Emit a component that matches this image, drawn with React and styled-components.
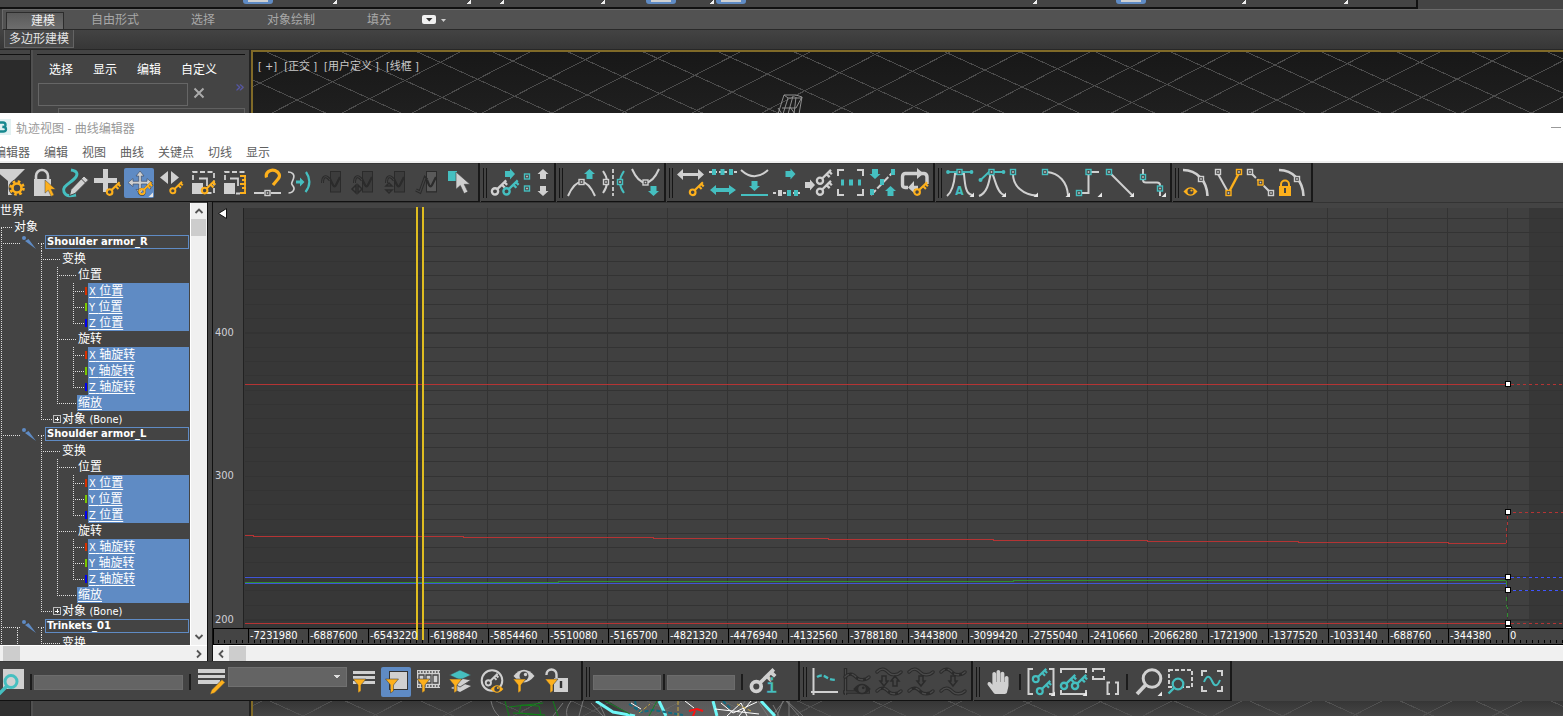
import styled, { createGlobalStyle, css } from "styled-components";
import { FaHandPaper } from "react-icons/fa";

const W = "#d0d0d0";
const T = "#45bfc0";
const O = "#fdb01c";
const D = "#2b2b2b";
const BG = "#444444";
const BLUE = "#5f8bc4";

const GlobalStyle = createGlobalStyle`
  * {
    box-sizing: border-box;
  }
  body {
    margin: 0;
    background: ${BG};
    overflow: hidden;
    font-family: "DejaVu Sans Condensed", "Noto Sans CJK SC", sans-serif;
    font-size: 12px;
  }
  button, input, select {
    font: inherit;
    border: 0;
    padding: 0;
    margin: 0;
    border-radius: 0;
  }
`;

/* ---------- icon pieces, all on a 30x30 grid ---------- */

const Key = ({ x, y, s = 1, c = O }) => (
  <g transform={`translate(${x} ${y}) scale(${s})`} fill="none" stroke={c}>
    <circle cx="3.6" cy="10.6" r="2.8" strokeWidth="2.1" />
    <path d="M5.6 8.6 13.6.8M9.6 4.6l2.8 2.8M11.8 2.2l2.6 2.6" strokeWidth="2.1" />
  </g>
);

const Node = ({ x, y, c = T }) => (
  <g>
    <rect x={x - 2.5} y={y - 2.5} width="5" height="5" fill={BG} stroke={c} strokeWidth="1.4" />
    <rect x={x - 0.8} y={y - 0.8} width="1.6" height="1.6" fill={W} />
  </g>
);

const Arrow = ({ x, y, r = 0, c = T }) => (
  <path
    d="M0-5 5.5 0H3V5H-3V0H-5.5Z"
    fill={c}
    transform={`translate(${x} ${y}) rotate(${r})`}
  />
);

const Funnel = ({ x = 4, y = 12 }) => (
  <path
    d="M0 0H13L8 6V12L5 14V6Z"
    transform={`translate(${x} ${y})`}
    fill={O}
    stroke={BG}
    strokeWidth=".6"
  />
);

const Corner = () => <path d="M29 24.5V29H24.5Z" fill="#e8e8e8" />;

const Line = ({ d, c = W, w = 2, dash }) => (
  <path d={d} fill="none" stroke={c} strokeWidth={w} strokeDasharray={dash} />
);

const Eye = ({ x, y, s = 1, c = O }) => (
  <g transform={`translate(${x} ${y}) scale(${s})`}>
    <path d="M-7 0Q0-8.5 7 0 0 8.5-7 0Z" fill={c} />
    <circle r="3" fill={BG} />
    <circle cx="1" cy="-1" r="1.1" fill={c} />
  </g>
);

const Cursor = ({ x, y, s = 1, c = W }) => (
  <path
    d="M0 0V16L4 12.5 7.5 20 11 18.4 7.6 11.4H13Z"
    fill={c}
    stroke={BG}
    strokeWidth=".6"
    transform={`translate(${x} ${y}) scale(${s})`}
  />
);

const Ghost = ({ children, hump = true }) => (
  <g>
    <rect x="14.5" y="3.5" width="10" height="20.5" fill="#3c3c3c" stroke={D} />
    <path d="M14 11 17 17Q18.500 20 20 17L24 9" fill="none" stroke={D} strokeWidth="2.200" />
    {hump && (
      <>
        <path d="M6.500 15C6.500 8 10 6.500 14 12" fill="none" stroke={D} strokeWidth="3" />
        <path d="M6.500 15C6.500 8 10 6.500 14 12" fill="none" stroke={BG} strokeWidth="1" />
      </>
    )}
    {children}
  </g>
);

const Wave = ({ y, c = D, dash, hollow }) => (
  <g fill="none" strokeLinecap="round">
    <path d={`M3 ${y}C9 ${y - 6} 13 ${y - 1} 15 ${y + 1}S23 ${y + 4} 27 ${y}`} stroke={c} strokeWidth="3.400" />
    {hollow && (
      <path d={`M3 ${y}C9 ${y - 6} 13 ${y - 1} 15 ${y + 1}S23 ${y + 4} 27 ${y}`} stroke="#4a4a4a" strokeWidth="1.400" strokeDasharray={dash} />
    )}
  </g>
);

const GhostArrow = ({ x, y, r }) => (
  <path d="M0-5 4 0H2V5H-2V0H-4Z" fill="none" stroke={D} strokeWidth="1.500" transform={`translate(${x} ${y}) rotate(${r})`} />
);

const icons = {
  filter: (
    <>
      <path d="M-3 1H29L17 13V27H12V13L0 3Z" fill={W} />
      <circle cx="21" cy="20" r="8.500" fill={BG} />
      <circle cx="21" cy="20" r="6.500" fill="none" stroke={O} strokeWidth="2.600" strokeDasharray="2.600 2.500" />
      <circle cx="21" cy="20" r="4.500" fill="none" stroke={O} strokeWidth="2.600" />
    </>
  ),
  lock: (
    <>
      <path d="M8 12V8a6 6 0 0 1 12 0v4" fill="none" stroke={W} strokeWidth="2.600" />
      <rect x="6" y="11" width="17" height="17" fill={W} />
      <Cursor x={17} y={12} s={0.82} c={O} />
    </>
  ),
  draw: (
    <>
      <Line d="M11 2C18 3 19 7 13 12S2 19 4 24 11 28 16 27" c={T} w={3} />
      <path d="M24 8 28.500 12 15 25.500 9.500 27.500 11 21.500Z" fill={W} stroke={BG} />
      <path d="M21.500 11 25.500 15" stroke={BG} />
    </>
  ),
  addKey: (
    <>
      <path d="M11 1h5v9h9v5h-9v9h-5v-9H2v-5h9Z" fill={W} />
      <Key x={14} y={13.500} />
    </>
  ),
  move: (
    <>
      <path d="M16 3 20 8H17.300V13.300H23V10.500L28 14.600 23 18.600V16H17.300V21.500H20L16 26 12 21.500H14.700V16H9V18.600L4 14.600 9 10.500V13.300H14.700V8H12Z" fill={W} stroke="#40506a" strokeWidth=".7" />
      <Key x={14} y={13} c="#2d3c55" s={1.030} />
      <Key x={14.500} y={13.500} s={0.950} />
      <Corner />
    </>
  ),
  slide: (
    <>
      <path d="M12 3V16L4 9.500ZM15 3 23 9.500 15 16Z" fill={W} />
      <Key x={13.500} y={13} s={0.920} />
    </>
  ),
  scale: (
    <>
      <Line d="M5 12V4H26V25H16" w={1.800} dash="5 2.500" />
      <rect x="4" y="15" width="11" height="11" fill={W} />
      <Line d="M11 10.500H19V18" w={1.800} />
      <Key x={13} y={12} />
    </>
  ),
  scaleValue: (
    <>
      <Line d="M5 12V4H26M16 25.500H20" w={1.800} dash="5 2.500" />
      <rect x="4" y="15" width="11" height="11" fill={W} />
      <Line d="M10 10.500H18V18" w={1.800} />
      <Line d="M25 7V26M20 8H26M22 12H26M20 16H26M22 20H26M20 25H26" c={O} w={1.800} />
    </>
  ),
  snap: (
    <>
      <Line d="M14.500 9.500C13 4 19 1 23 2.500S29 8 26 11L21 17" c={O} w={3.200} />
      <Line d="M2 25H12M19 25H29" />
      <Node x={15.500} y={25} c={W} />
    </>
  ),
  parameter: (
    <>
      <Line d="M4 4C8 4 11 6 9.500 10.500S6.500 15 9 18 9 25 4.500 25" w={1.600} />
      <path d="M12 12.500H16V9.500L20.500 14 16 18.500V15.500H12Z" fill={T} />
      <Line d="M22 4Q29 14 21.500 24" c={T} w={2.200} />
    </>
  ),
  ghost1: <Ghost />,
  ghost2: (
    <Ghost>
      <path d="M4 21l4-4v8ZM14 21l-4-4v8Z" fill={BG} stroke={D} strokeWidth="1.500" />
    </Ghost>
  ),
  ghost3: (
    <Ghost>
      <path d="M9 15l3 3H6ZM9 25l3-3H6Z" fill={BG} stroke={D} strokeWidth="1.500" />
    </Ghost>
  ),
  ghost4: (
    <Ghost hump={false}>
      <rect x="15" y="4" width="9" height="19" fill="#5a5a5a" />
      <path d="M15 12 17 17Q18.500 20 20 17L24 9" fill="none" stroke={D} strokeWidth="2.200" />
      <path d="M4 22 8 24 13 10 15 12" fill="none" stroke={D} strokeWidth="3.200" />
      <path d="M4 22 8 24 13 10" fill="none" stroke={BG} strokeWidth="1.200" />
    </Ghost>
  ),
  select: (
    <>
      <rect x="4" y="3" width="9" height="10" fill={T} />
      <Cursor x={12} y={4} s={1.080} />
    </>
  ),
  moveKeys: (
    <>
      <Arrow x={20} y={6} r={90} />
      <Key x={1} y={11.500} c={W} s={1.120} />
      <Key x={12.500} y={11.500} c={T} s={1.120} />
    </>
  ),
  valueDots: (
    <>
      <Node x={5} y={8.500} />
      <Node x={5} y={20.500} />
      <Arrow x={21} y={6} c={W} />
      <Arrow x={21} y={23} r={180} c={W} />
    </>
  ),
  peak: (
    <>
      <Line d="M2 28C6 19 11 14 15.500 14S25 19 29 28" />
      <Node x={15.500} y={14} c={W} />
      <Arrow x={23.500} y={6} />
    </>
  ),
  mirror: (
    <>
      <Line d="M5 3Q13 14 5 25" />
      <Line d="M15 1V28" w={1.800} dash="4 2" />
      <Line d="M26 3Q18 14 26 25" c={T} />
      <Node x={8} y={14} c={W} />
      <Node x={22} y={14} />
    </>
  ),
  valley: (
    <>
      <Line d="M2 1C6 10 11 14.500 15.500 14.500S25 10 29 1" />
      <Node x={15.500} y={14.500} c={W} />
      <Arrow x={23.500} y={23} r={180} />
    </>
  ),
  stretch: (
    <>
      <path d="M1 6.500 7 1V5H22V1L28 6.500 22 12V8H7V12Z" fill={W} />
      <Key x={13} y={13.500} s={1.020} />
    </>
  ),
  spread: (
    <>
      <Line d="M1 4H29" c={W} dash="3 2" />
      <path d="M4 1h4v6H4ZM12.500 1h4v6h-4ZM21 1h4v6h-4ZM2 22 8 17V20H21V17L28 22 21 27V24H8V27Z" fill={T} />
    </>
  ),
  flatten: (
    <>
      <Line d="M1 2Q14.500 14.500 28 2" />
      <Arrow x={14.500} y={18} r={180} />
      <Line d="M1 27H28" c={T} />
    </>
  ),
  shiftRight: (
    <>
      <Arrow x={18.500} y={6} r={90} />
      <Line d="M1 25H28" dash="3 2" />
      <rect x="6" y="22" width="4" height="6" fill={W} />
      <path d="M15 22h4v6h-4ZM22 22h4v6h-4Z" fill={T} />
    </>
  ),
  insertKeys: (
    <>
      <Arrow x={6} y={17} r={90} c={W} />
      <Key x={12} y={1} c={W} s={1.100} />
      <Key x={12} y={12} c={W} s={1.100} />
    </>
  ),
  frame: (
    <>
      <Line d="M2 8V2H8M21 2H27V8M27 21V27H21M8 27H2V21" />
      <path d="M5 11.500h3v6H5ZM13 11.500h4v6h-4ZM22 11.500h3v6h-3Z" fill={T} />
    </>
  ),
  sendValues: (
    <>
      <Line d="M3 27 27 2" dash="7 2" />
      <path d="M2 21h4v6H2ZM12 11h4v6h-4ZM23 1h4v6h-4Z" fill={T} />
      <Arrow x={7} y={6} r={180} />
      <Arrow x={22.500} y={23} />
    </>
  ),
  loop: (
    <>
      <Line d="M8 19.500H5Q2.500 19.500 2.500 17V9Q2.500 5.500 5 5.500H18M21 5.500H24Q27 6 27 9V16" w={3.400} />
      <path d="M17 0V11L23.500 5.500ZM14 13V25L8 19.500ZM14 17.800H18V21H14Z" fill={W} />
      <Key x={13.500} y={13.500} />
    </>
  ),
  tanAuto: (
    <>
      <Line d="M2 28C7 24 9 18 10 6H19C20 18 21 26 27 27" />
      <Line d="M2 4H27" c={T} w={1.800} />
      <circle cx="3" cy="4" r="1.900" fill={T} />
      <circle cx="26.500" cy="4" r="1.900" fill={T} />
      <Node x={14.500} y={4} />
      <text x="14.500" y="27" textAnchor="middle" fontSize="12" fontWeight="bold" fill={T}>A</text>
      <Corner />
    </>
  ),
  tanSpline: (
    <>
      <Line d="M2 28C10 25 12 15 13.500 6M15.500 6C18 11 20 25 27 27" />
      <Line d="M3.500 12 12 4H26" c={T} w={1.800} />
      <circle cx="3.500" cy="12" r="2" fill={T} />
      <circle cx="26.500" cy="4" r="1.900" fill={T} />
      <Node x={14.500} y={4} />
      <Corner />
    </>
  ),
  tanFast: (
    <>
      <Line d="M4 6C4 18 14 27 28 27.500" />
      <Node x={4} y={4} />
      <Corner />
    </>
  ),
  tanSlow: (
    <>
      <Line d="M6 4C18 5 26 14 27 27" />
      <Node x={4} y={4} />
      <Corner />
    </>
  ),
  tanStep: (
    <>
      <Line d="M26 4H15.500V25H6" />
      <Node x={15.500} y={4} />
      <Node x={6} y={25} />
      <Corner />
    </>
  ),
  tanLinear: (
    <>
      <Line d="M5 5 27 27" />
      <Node x={4} y={4} />
      <Corner />
    </>
  ),
  tanSmooth: (
    <>
      <Line d="M6 1V12Q6 14.500 9 14.500H20Q23 14.500 23 17V28" />
      <Node x={6} y={9} />
      <Node x={23} y={20.500} />
      <Corner />
    </>
  ),
  tanShow: (
    <>
      <Line d="M1 2C15 2 25 13 25.500 28" w={2.600} />
      <Node x={19} y={11} c={W} />
      <Eye x={8.500} y={23.500} />
    </>
  ),
  tanBreak: (
    <>
      <Line d="M4 6 14 24" />
      <Line d="M24.500 6 15 24" c={O} w={2.400} />
      <Node x={4} y={4} c={W} />
      <Node x={25} y={4} c={O} />
      <Node x={14.500} y={25} c={O} />
    </>
  ),
  tanUnify: (
    <>
      <Line d="M5 5 25 25" dash="7 2" />
      <Node x={4} y={4} c={W} />
      <Node x={14.500} y={14.500} c={O} />
      <Node x={25} y={25} c={W} />
    </>
  ),
  tanLock: (
    <>
      <Line d="M1 2C15 2 25 13 25.500 28" w={2.600} />
      <Node x={19} y={11} c={W} />
      <path d="M3 19V16.500a4 4 0 0 1 8 0V19" fill="none" stroke={O} strokeWidth="2" />
      <rect x="1" y="18" width="12" height="10" fill={O} />
      <path d="M7 20v5" stroke={BG} strokeWidth="2" />
    </>
  ),
  zoomSelected: (
    <>
      <rect x="7" y="2" width="21" height="20" fill={W} />
      <circle cx="15" cy="14.500" r="6" fill={W} stroke={T} strokeWidth="3" />
      <Line d="M11 19 3 27" c={T} w={3.400} />
    </>
  ),
  editSet: (
    <>
      <path d="M2 2h27v4H2ZM2 8h27v3H2ZM2 13h22v4H2Z" fill={W} />
      <path d="M26 12.500 29 15.500 18.500 26 14 27.500 15.500 23Z" fill={O} stroke={BG} strokeWidth=".6" />
    </>
  ),
  filterList: (
    <>
      <path d="M4 4h22v3H4ZM4 9h22v3H4ZM4 14h22v3H4Z" fill={W} />
      <Funnel />
    </>
  ),
  filterSelected: (
    <>
      <rect x="8.500" y="4.500" width="18" height="18" fill={W} stroke="#333" />
      <Funnel x={4.500} />
    </>
  ),
  filterFilm: (
    <>
      <rect x="4" y="3" width="23" height="18" fill={W} />
      <path d="M5 5H27M5 19H27" stroke={BG} strokeWidth="1.600" strokeDasharray="1.600 1.400" />
      <path d="M6 8h5v8H6ZM13 8h5v8h-5ZM20 8h5v8h-5Z" fill="none" stroke={BG} strokeWidth="1.300" />
      <Funnel />
    </>
  ),
  filterLayers: (
    <>
      <path d="M6 21 16 16 26 19 15 25Z" fill={W} />
      <path d="M6 15 15 11 26 13 15 20Z" fill={W} stroke={BG} strokeWidth=".8" />
      <path d="M4.500 8 15 3 26 8 15 13Z" fill={T} stroke={BG} strokeWidth=".6" />
      <Funnel />
    </>
  ),
  filterAnimated: (
    <>
      <circle cx="15" cy="13.500" r="10.300" fill="none" stroke={W} strokeWidth="2" />
      <Key x={8} y={6} c={W} s={0.930} />
      <Eye x={20} y={22} s={0.900} />
    </>
  ),
  filterVisible: (
    <>
      <Eye x={15} y={9} s={1.500} c={W} />
      <Funnel />
    </>
  ),
  filterUnlocked: (
    <>
      <path d="M5.500 8V7.500a5 5 0 0 1 10 0V12" fill="none" stroke={W} strokeWidth="2.400" />
      <rect x="13" y="11" width="14" height="14" fill={W} />
      <path d="M20 14v7" stroke="#333" strokeWidth="2.400" />
      <Funnel />
    </>
  ),
  keyInfo: (
    <>
      <Key x={1} y={1} c={W} s={1.750} />
      <text x="22.500" y="26" textAnchor="middle" fontSize="19" fontWeight="bold" fontFamily="DejaVu Sans Mono" fill={T} stroke={BG} strokeWidth=".4">i</text>
    </>
  ),
  outOfRange: (
    <>
      <Line d="M3.500 1V28M1 25H28" />
      <Line d="M7 10Q12 7 16 10T27 13" c={T} w={2.400} dash="5 2" />
    </>
  ),
  isolate: (
    <>
      <Line d="M3.500 1V28M1 25H28" c={D} w={3.400} />
      <Line d="M3.500 2V28M2 25H27" c="#4a4a4a" w={1} />
      <Wave y={10} hollow dash="4 4" />
      <Eye x={20} y={22} s={1.250} c={D} />
    </>
  ),
  relative: (
    <>
      <Wave y={5} hollow />
      <GhostArrow x={10} y={14} r={180} />
      <GhostArrow x={21} y={14} r={0} />
      <Wave y={24} hollow dash="4 4" />
    </>
  ),
  bufferA: (
    <>
      <Wave y={5} hollow />
      <GhostArrow x={15} y={14} r={180} />
      <Wave y={24} hollow dash="3 5" />
    </>
  ),
  bufferB: (
    <>
      <Wave y={5} hollow dash="4 4" />
      <GhostArrow x={15} y={14} r={180} />
      <Wave y={24} hollow />
    </>
  ),
  frameHoriz: (
    <>
      <Line d="M7 2H2.500V27H7M23 2H27.500V27H23" />
      <Key x={6} y={1} c={T} s={1.050} />
      <Key x={10} y={13} c={T} s={1.050} />
      <Corner />
    </>
  ),
  frameValue: (
    <>
      <Line d="M3 6V2H28V6M3 23V27H28V23" />
      <Key x={2} y={7} c={T} s={1.120} />
      <Key x={13} y={7} c={T} s={1.120} />
      <Corner />
    </>
  ),
  frameBoth: <Line d="M3 5V2H14V5M3 9V12H14V9M20 15.500H17.500V27H20M25 15.500H28V27H25" />,
  zoom: (
    <>
      <circle cx="19" cy="11.500" r="8.800" fill="none" stroke={W} strokeWidth="3" />
      <Line d="M12.500 18 4 27" w={3.800} />
      <Corner />
    </>
  ),
  zoomRegion: (
    <>
      <rect x="4" y="3" width="23" height="17" fill="none" stroke={W} strokeWidth="2" strokeDasharray="4 2" />
      <circle cx="13" cy="17" r="5.300" fill={BG} stroke={T} strokeWidth="2.200" />
      <Line d="M9 21 3.500 26.500" c={T} w={2.400} />
    </>
  ),
  isolateCurve: (
    <>
      <Line d="M5 9V4H10M20 4H25V9M25 19V24H20M10 24H5V19" />
      <Line d="M7 15Q11 5 15 14T23 13" c={T} />
    </>
  ),
};

const ToolButton = styled.button`
  flex: none;
  width: 30px;
  height: 30px;
  display: grid;
  place-items: center;
  border-radius: 2px;
  color: ${W};
  background: ${(p) => (p.$active ? BLUE : "transparent")};
`;

const Tool = ({ name, active, children }) => (
  <ToolButton type="button" aria-label={name} $active={active}>
    {children || (
      <svg width="30" height="30" viewBox="0 0 30 30">
        {icons[name]}
      </svg>
    )}
  </ToolButton>
);

/* ---------- host application behind the editor ---------- */

const Page = styled.div`
  min-height: 100vh;
  display: flex;
  flex-direction: column;
  overflow: hidden;
`;

const MainStrip = styled.div`
  width: calc(100% - 145px);
  height: 9px;
  display: flex;
  border-right: 2px solid #111;
  border-bottom: 2px solid #111;
`;

const StripButton = styled.button`
  flex: none;
  width: 30px;
  height: 4px;
  margin-left: ${(p) => p.$gap}px;
  background: linear-gradient(${W}, ${W}) 5px 0 / 20px 2px no-repeat ${BLUE};
  border-radius: 0 0 3px 3px;
`;

const StripFlyout = styled.span`
  flex: none;
  width: 4px;
  height: 4px;
  margin-left: ${(p) => p.$gap}px;
  background: linear-gradient(135deg, transparent 50%, #eee 50%);
`;

const RibbonTabs = styled.div`
  height: 21px;
  display: flex;
  align-items: stretch;
  margin-left: 2px;
  padding: 2px 0 0 3px;
  background: #525252;
  border-top: 1px solid #6a6a6a;
  border-left: 1px solid #6a6a6a;
  border-bottom: 1px solid #292929;
`;

const RibbonTab = styled.button`
  margin-right: ${(p) => p.$after}px;
  color: #a8a8a8;
  background: none;
  line-height: 17px;
  ${(p) =>
    p.$active &&
    css`
      padding: 0 8px 0 24px;
      color: #eee;
      background: linear-gradient(#5a5a5a, #6d6d6d);
      border: 1px solid #2c2c2c;
      border-bottom: 0;
      line-height: 16px;
    `}
`;

const RibbonPanels = styled.div`
  height: 20px;
  padding-left: 4px;
  background: linear-gradient(#434343, #373737);
  border-bottom: 1px solid #272727;
`;

const PanelButton = styled.button`
  height: 18px;
  padding: 0 4px;
  color: #e4e4e4;
  line-height: 18px;
  background: #474747;
  border: 1px solid #646464;
  border-top: 0;
`;

const Scene = styled.div`
  display: flex;
  height: ${(p) => p.$height}px;
`;

const Dock = styled.div`
  width: 31px;
  background: ${(p) =>
    p.$plain ? "#303030" : `linear-gradient(${BG} 0 4px, #111 4px 5px, ${BG} 5px 10px, #2b2b2b 10px)`};
  border-right: 1px solid #222;
`;

const Explorer = styled.div`
  width: 220px;
  padding: 4px 4px 0 4px;
  border-left: 2px solid #505050;
  border-right: 2px solid #222;
  overflow: hidden;
`;

const ExplorerMenu = styled.nav`
  display: flex;
  gap: 20px;
  padding: 6px 0 0 12px;
  border-top: 1px solid #111;
  line-height: 18px;
`;

const MenuLink = styled.a`
  color: ${(p) => p.$color};
  text-decoration: none;
  white-space: nowrap;
`;

const SearchRow = styled.div`
  display: flex;
  gap: 4px;
  align-items: center;
  margin: 4px 0 2px 1px;
`;

const SearchInput = styled.input`
  width: 150px;
  height: 23px;
  background: #444;
  border: 1px solid #666;
`;

const ClearButton = styled.button`
  width: 14px;
  height: 22px;
  background: none;
`;

const More = styled.span`
  margin-left: auto;
  align-self: flex-start;
  color: #5a5aa8;
  font-family: "DejaVu Sans";
  font-size: 16px;
  line-height: 8px;
`;

const ExplorerEdge = styled.div`
  height: 8px;
  margin-left: 21px;
  border: 1px solid #606060;
`;

const Viewport = styled.div`
  position: relative;
  flex: 1;
  overflow: hidden;
  background: ${(p) => (p.$dim ? "linear-gradient(#363636, #454545)" : "linear-gradient(#181818, #1f1f1f)")};
  border-left: 2px solid #806a28;
  border-top: ${(p) => (p.$dim ? 0 : 2)}px solid #806a28;

  > svg {
    display: block;
    width: 100%;
    height: 100%;
  }
`;

const ViewportLabel = styled.div`
  position: absolute;
  left: 5px;
  top: 7px;
  display: flex;
  gap: 7px;
  color: #c8c8c8;
  font-size: 11px;
  line-height: 16px;
  white-space: pre;
`;

const FloorGrid = ({ ox, oy, color }) => {
  const lines = [];
  for (let i = -24; i < 30; i++) {
    const x = ox + i * 72.5;
    const y = oy - i * 1.3;
    lines.push(`M${x - 372} ${y - 169}l744 338M${x - 353} ${y + 182}l706 -364`);
  }
  return <path d={lines.join("")} fill="none" stroke={color} strokeWidth="1" shapeRendering="crispEdges" />;
};

/* ---------- curve editor window ---------- */

const TitleBar = styled.header`
  height: 28px;
  display: flex;
  align-items: center;
  background: #fff;
  color: #999;
  padding-right: 2px;
`;

const AppMark = styled.svg`
  flex: none;
  width: 11px;
  height: 16px;
  margin-right: 5px;
  background: #e2f1f2;
`;

const Minimise = styled.button`
  width: 10px;
  height: 1px;
  margin-left: auto;
  background: #999;
`;

const MenuBar = styled.nav`
  height: 22px;
  display: flex;
  gap: 14px;
  margin-left: -6px;
  background: #fff;
  border-bottom: 2px solid #eee;
  line-height: 24px;
`;

const ToolRow = styled.div`
  display: flex;
  gap: 1px;
  margin-left: -4px;
  background: ${BG};
`;

const ToolGroup = styled.div`
  display: flex;
  align-items: center;
  gap: 2px;
  padding: ${(p) => p.$top || 5}px ${(p) => p.$end || 3}px 3px ${(p) => (p.$first ? 0 : 2)}px;
  border-right: 2px solid #191919;
  border-bottom: 1px solid #111;
  box-shadow: inset 0 1px #383838;
`;

const Grip = styled.span`
  width: 4px;
  height: 30px;
  margin-right: 1px;
  border: solid #161616;
  border-width: 0 1px;
`;

const Separator = styled.span`
  width: 2px;
  height: 16px;
  margin-left: ${(p) => p.$before || 0}px;
  margin-right: ${(p) => p.$after || 0}px;
  background: #1c1c1c;
`;

const StatField = styled.input`
  width: ${(p) => p.$width}px;
  height: 15px;
  background: #646464;
  border: 1px solid #6c6c6c;
`;

const SetSelect = styled.select`
  appearance: none;
  width: 119px;
  height: 20px;
  align-self: flex-start;
  border: 1px solid #707070;
  background: linear-gradient(to bottom right, #ddd 50%, transparent 50%) 108px 7px / 3px 4px no-repeat,
    linear-gradient(to bottom left, #ddd 50%, transparent 50%) 105px 7px / 3px 4px no-repeat, #646464;
`;

const Body = styled.main`
  display: flex;
  min-width: 0;
`;

const TreePane = styled.section`
  flex: none;
  width: 207px;
`;

const TreeView = styled.div`
  display: flex;
  height: 443px;
  overflow: hidden;
`;

const TreeList = styled.ul`
  flex: 1;
  min-width: 0;
  margin: 0;
  padding: 0 1px 0 0;
  list-style: none;
  color: #fff;
  font-size: 11px;
  line-height: 16px;
  border-top: 1px solid ${BG};
`;

const TreeRow = styled.li`
  display: flex;
  height: 16px;
  white-space: nowrap;
`;

const dotsV = "repeating-linear-gradient(#ddd 0 1px, transparent 1px 2px)";
const dotsH = "repeating-linear-gradient(90deg, #ddd 0 1px, transparent 1px 2px)";

const Guide = styled.span`
  flex: none;
  width: ${(p) => p.$width}px;
  background: ${(p) => {
    const layers = [];
    if (p.$v === "full") layers.push(`${dotsV} 1px 0 / 1px 16px no-repeat`);
    if (p.$v === "top") layers.push(`${dotsV} 1px 0 / 1px 9px no-repeat`);
    if (p.$v === "low") layers.push(`${dotsV} 1px 9px / 1px 7px no-repeat`);
    if (p.$h) layers.push(`${dotsH} 1px 8px / ${p.$h}px 1px no-repeat`);
    return layers.length ? layers.join(", ") : "none";
  }};
`;

const NodeName = styled.span`
  flex: 1;
  height: 14px;
  padding-left: 1px;
  font-family: "DejaVu Sans";
  font-weight: bold;
  font-size: 10px;
  line-height: 12px;
  border: 1px solid ${BLUE};
`;

const Label = styled.span`
  font-size: 12px;
  flex: ${(p) => (p.$selected ? 1 : "none")};
  padding-left: ${(p) => p.$pad || 0}px;
  background: ${(p) => (p.$selected ? BLUE : "none")};
  text-decoration: ${(p) => (p.$selected ? "underline" : "none")};
  text-underline-offset: 2px;
`;

const Swatch = styled.span`
  width: 2px;
  height: 8px;
  margin: 4px 1px 0 0;
  background: ${(p) => p.$color};
`;

const Latin = styled.span`
  font-size: 11px;
`;

const Expander = styled.button`
  width: 8px;
  height: 8px;
  margin: 4px 1px 0 0;
  color: #fff;
  border: 1px solid #bbb;
  background: linear-gradient(#fff, #fff) 1px 3px / 4px 1px no-repeat,
    linear-gradient(#fff, #fff) 3px 1px / 1px 4px no-repeat, ${BG};
`;

const ScrollTrack = styled.div`
  display: flex;
  flex: none;
  background: #f0f0f0;
  flex-direction: ${(p) => (p.$vertical ? "column" : "row")};
  ${(p) =>
    p.$vertical
      ? css`
          width: 17px;
          margin-top: 1px;
          border-left: 1px solid #fff;
        `
      : css`
          height: 16px;
          border-top: 1px solid #fff;
        `}
`;

const ScrollThumb = styled.span`
  flex: none;
  width: ${(p) => (p.$vertical ? 15 : 17)}px;
  height: ${(p) => (p.$vertical ? 17 : 15)}px;
  margin-left: ${(p) => p.$gap || 0}px;
  background: #cdcdcd;
`;

const ScrollArrow = styled.button`
  flex: none;
  width: 16px;
  height: 16px;
  display: grid;
  place-items: center;
  background: none;
  margin: ${(p) => (p.$end ? "auto 0 0 auto" : 0)};
`;

const Chevron = ({ r = 0 }) => (
  <svg width="10" height="10" viewBox="-5 -5 10 10">
    <path d="M-3.500 2 0-1.500 3.500 2" fill="none" stroke="#555" strokeWidth="1.800" transform={`rotate(${r})`} />
  </svg>
);

const Splitter = styled.div`
  flex: none;
  width: 6px;
  background: ${BG};
  border: solid #111;
  border-width: 0 1px;
`;

const CurvePane = styled.section`
  flex: 1;
  min-width: 0;
  border-top: 1px solid #333;
`;

const CurveSvg = styled.svg`
  display: block;
  width: 100%;
  height: 442px;
`;

const BoneMark = () => (
  <svg width="16" height="16" viewBox="0 0 16 16">
    <circle cx="3" cy="3" r="2" fill={BLUE} />
    <path d="M4 6 7.500 4 15 14Z" fill={BLUE} />
  </svg>
);

const axes = [
  ["X", "#d93000"],
  ["Y", "#7ac800"],
  ["Z", "#0000f0"],
];

const Track = ({ axis, name, color, last, more }) => (
  <TreeRow>
    <Guide $width={40} $v="full" />
    <Guide $width={16} $v="full" />
    <Guide $width={16} $v={more ? "full" : "none"} />
    <Guide $width={13} $v={last ? "top" : "full"} $h={12} />
    <Swatch $color={color} />
    <Label $selected $pad={1}>
      <Latin>{axis}</Latin> {name}
    </Label>
  </TreeRow>
);

const Category = ({ name, selected, last }) => (
  <TreeRow>
    <Guide $width={40} $v="full" />
    <Guide $width={16} $v="full" />
    <Guide $width={21} $v={last ? "top" : "full"} $h={19} />
    <Label $selected={selected} $pad={1}>{name}</Label>
  </TreeRow>
);

const NodeTitle = ({ name, branch }) => (
  <TreeRow>
    {branch ? (
      <>
        <Guide $width={16} $v="full" $h={15} />
        <Guide $width={5} $v="low" $h={4} />
      </>
    ) : (
      <Guide $width={21} $v="full" $h={19} />
    )}
    <BoneMark />
    <Guide $width={3} $h={2} />
    <Guide $width={5} $v="low" $h={4} />
    <NodeName>{name}</NodeName>
  </TreeRow>
);

const TransformTitle = ({ branch }) => (
  <TreeRow>
    <Guide $width={branch ? 16 : 40} $v="full" />
    {branch && <Guide $width={24} $v="full" />}
    <Guide $width={21} $v="full" $h={19} />
    <Label $pad={1}>变换</Label>
  </TreeRow>
);

const BoneNode = ({ name }) => (
  <>
    <NodeTitle name={name} />
    <TransformTitle />
    <Category name="位置" />
    {axes.map(([axis, color]) => (
      <Track key={axis} axis={axis} name="位置" color={color} last={axis === "Z"} more />
    ))}
    <Category name="旋转" />
    {axes.map(([axis, color]) => (
      <Track key={axis} axis={axis} name="轴旋转" color={color} last={axis === "Z"} more />
    ))}
    <Category name="缩放" selected last />
    <TreeRow>
      <Guide $width={40} $v="full" />
      <Guide $width={13} $v="top" $h={11} />
      <Expander type="button" aria-label="展开" />
      <Label>
        对象 <Latin>(Bone)</Latin>
      </Label>
    </TreeRow>
  </>
);

const Marker = ({ y }) => <rect x="1505.5" y={y - 2.5} width="5" height="5" fill="#fff" stroke="#000" />;

// Curve space: x grows 60 per 344380 frames, y shrinks 143.4 per 100 units.
const CurveView = () => {
  const rows = Array.from({ length: 29 }, (_, i) => Math.round(217.6 + i * 14.33));
  const frames = Array.from({ length: 22 }, (_, i) => i);
  const ticks = Array.from({ length: 240 }, (_, i) => 218 + i * 6);
  return (
    <CurveSvg>
      <g transform="translate(-213 -203)" shapeRendering="crispEdges">
        <rect x="213" y="203" width="4000" height="442" fill={BG} />
        <rect x="244" y="208" width="4000" height="421" fill="#373737" />
        <rect x="424" y="208" width="1105" height="421" fill="#404040" />
        <path d="M243.500 208V628" stroke="#222" />
        {rows.map((y) => (
          <path key={y} d={`M245 ${y + 0.5}H4000`} stroke="#333" strokeWidth={[332, 475, 619].includes(y) ? 2 : 1} />
        ))}
        {frames.slice(4).map((i) => (
          <path key={i} d={`M${247.5 + i * 60} 208V628`} stroke="#333" />
        ))}
        <path d="M226.500 208.500V218.500L218.500 213.500Z" fill="#fff" stroke="#111" shapeRendering="auto" />
        <path d="M245 384.500H1507M245 535.500H253V536.500H463V537.500H653V538.500H828V539.500H993V540.500H1147V541.500H1298V542.500H1448V543.500H1506M245 623.500H1507" fill="none" stroke="#b53434" />
        <path d="M1506 543 1508 514M1511 384.500H4000M1513 512.500H4000M1511 623.500H4000" fill="none" stroke="#b53434" strokeDasharray="3 3" />
        <path d="M245 577.500H1507M245 583.500H1506V587" fill="none" stroke="#4055d8" />
        <path d="M1511 577.500H4000M1513 590.500H4000" stroke="#4055ff" strokeDasharray="3 3" />
        <path d="M245 582.500H558V581.500H1013V580.500H1505.500" fill="none" stroke="#2f8f2f" />
        <path d="M1506 581 1507.500 620" stroke="#2f8f2f" strokeDasharray="4 4" />
        <rect x="213" y="628" width="4000" height="16" fill={BG} stroke="#000" />
        {ticks.map((x) => (
          <path key={x} d={`M${x + 0.5} 640V643`} stroke="#000" />
        ))}
        {frames.map((i) => (
          <path key={i} d={`M${248.5 + i * 60} 629V643`} stroke="#000" />
        ))}
        <Marker y={384} />
        <Marker y={512} />
        <Marker y={577} />
        <Marker y={590} />
        <path d="M1505 626H1511V628H1505Z" fill="#fff" stroke="#000" />
        <Marker y={623} />
        <path d="M417 207V640M423 207V640" stroke="#dfbd20" strokeWidth="2" />
        <g fill="#d0d0d8" fontSize="11">
          <text x="215" y="336">400</text>
          <text x="215" y="479">300</text>
          <text x="215" y="623">200</text>
        </g>
        <g fill="#fff" fontSize="11">
          {frames.map((i) => (
            <text key={i} x={250 + i * 60} y="639">
              {i === 21 ? "0" : String((i - 21) * 344380)}
            </text>
          ))}
        </g>
      </g>
    </CurveSvg>
  );
};

const editTools = ["filter", "lock", "draw", "addKey", "move", "slide", "scale", "scaleValue", "snap", "parameter", "ghost1", "ghost2", "ghost3", "ghost4", "select"];
const toolGroups = [
  { end: 2, tools: ["moveKeys", "valueDots"] },
  { end: 4, tools: ["peak", "mirror", "valley"] },
  { end: 3, tools: ["stretch", "spread", "flatten", "shiftRight", "insertKeys", "frame", "sendValues", "loop"] },
  { end: 3, tools: ["tanAuto", "tanSpline", "tanFast", "tanSlow", "tanStep", "tanLinear", "tanSmooth"] },
  { end: 3, tools: ["tanShow", "tanBreak", "tanUnify", "tanLock"] },
];
const filterTools = ["filterList", "filterSelected", "filterFilm", "filterLayers", "filterAnimated", "filterVisible", "filterUnlocked"];
const menus = ["编辑器", "编辑", "视图", "曲线", "关键点", "切线", "显示"];
const viewLabels = ["[ +]", "[正交 ]", "[用户定义 ]", "[线框 ]"];

export default function App() {
  return (
    <Page>
      <GlobalStyle />
      <MainStrip>
        <StripButton $gap={243} aria-label="move" />
        <StripFlyout $gap={60} />
        <StripFlyout $gap={130} />
        <StripFlyout $gap={29} />
        <StripFlyout $gap={97} />
        <StripButton $gap={41} aria-label="layers" />
        <StripFlyout $gap={34} />
        <StripButton $gap={2} aria-label="ribbon" />
        <StripFlyout $gap={287} />
        <StripButton $gap={79} aria-label="curves" />
        <StripFlyout $gap={96} />
        <StripFlyout $gap={98} />
      </MainStrip>
      <RibbonTabs>
        <RibbonTab type="button" $active $after={27}>建模</RibbonTab>
        <RibbonTab type="button" $after={52}>自由形式</RibbonTab>
        <RibbonTab type="button" $after={52}>选择</RibbonTab>
        <RibbonTab type="button" $after={52}>对象绘制</RibbonTab>
        <RibbonTab type="button" $after={31}>填充</RibbonTab>
        <svg width="26" height="16" viewBox="0 0 26 16">
          <rect x="0" y="3" width="14" height="9" rx="2" fill="#f0f0f0" />
          <path d="M4 6H10.500L7.200 9.500Z" fill="#333" />
          <path d="M19 7H24L21.500 10Z" fill="#ccc" />
        </svg>
      </RibbonTabs>
      <RibbonPanels>
        <PanelButton type="button">多边形建模</PanelButton>
      </RibbonPanels>
      <Scene $height={63}>
        <Dock />
        <Explorer>
          <ExplorerMenu>
            {["选择", "显示", "编辑", "自定义"].map((m) => (
              <MenuLink key={m} href="#" $color="#fff">{m}</MenuLink>
            ))}
          </ExplorerMenu>
          <SearchRow>
            <SearchInput aria-label="搜索" />
            <ClearButton type="button" aria-label="清除">
              <svg width="12" height="12" viewBox="0 0 12 12">
                <path d="M1.500 1.500 10.500 10.500M10.500 1.500 1.500 10.500" stroke="#aaa" strokeWidth="2" />
              </svg>
            </ClearButton>
            <More>»</More>
          </SearchRow>
          <ExplorerEdge />
        </Explorer>
        <Viewport>
          <svg>
            <FloorGrid ox={259.7} oy={9} color="#4b4b4b" />
            <g fill="none" stroke="#909090" transform="translate(-1 0)">
              <path d="M526 62 532 43H544L550 45 547 62M530 56H544L550 45M532 43 536 46H550M536 46 531 62M541 44 536 62M544 45 542 62M526 56 530 62M538 55 543 62" />
            </g>
          </svg>
          <ViewportLabel>
            {viewLabels.map((l) => (
              <span key={l}>{l}</span>
            ))}
          </ViewportLabel>
        </Viewport>
      </Scene>

      <TitleBar>
        <AppMark viewBox="0 0 11 16">
          <path d="M0 3.500H3Q5.500 3.500 5.500 6T2.500 7.800Q6 7.800 6 10.200T3 12.500H0" fill="none" stroke="#16888f" strokeWidth="2.400" />
        </AppMark>
        轨迹视图 - 曲线编辑器
        <Minimise type="button" aria-label="最小化" />
      </TitleBar>
      <MenuBar>
        {menus.map((m) => (
          <MenuLink key={m} href="#" $color="#606060">{m}</MenuLink>
        ))}
      </MenuBar>
      <ToolRow>
        <ToolGroup $first $end={4}>
          {editTools.map((n) => (
            <Tool key={n} name={n} active={n === "move"} />
          ))}
        </ToolGroup>
        {toolGroups.map(({ end, tools }) => (
          <ToolGroup key={tools[0]} $end={end}>
            <Grip />
            {tools.map((n) => (
              <Tool key={n} name={n} />
            ))}
          </ToolGroup>
        ))}
      </ToolRow>

      <Body>
        <TreePane>
          <TreeView>
            <TreeList>
              <TreeRow>
                <Label>世界</Label>
              </TreeRow>
              <TreeRow>
                <Guide $width={13} $v="low" $h={11} />
                <Label $pad={1}>对象</Label>
              </TreeRow>
              <BoneNode name="Shoulder armor_R" />
              <BoneNode name="Shoulder armor_L" />
              <NodeTitle name="Trinkets_01" branch />
              <TransformTitle branch />
            </TreeList>
            <ScrollTrack $vertical>
              <ScrollArrow type="button" aria-label="上"><Chevron /></ScrollArrow>
              <ScrollThumb $vertical />
              <ScrollArrow type="button" aria-label="下" $end><Chevron r={180} /></ScrollArrow>
            </ScrollTrack>
          </TreeView>
          <ScrollTrack>
            <ScrollThumb $gap={3} />
            <ScrollArrow type="button" aria-label="右" $end><Chevron r={90} /></ScrollArrow>
          </ScrollTrack>
        </TreePane>
        <Splitter />
        <CurvePane>
          <CurveView />
          <ScrollTrack>
            <ScrollArrow type="button" aria-label="左"><Chevron r={-90} /></ScrollArrow>
            <ScrollThumb />
          </ScrollTrack>
        </CurvePane>
      </Body>

      <ToolRow>
        <ToolGroup $first $top={6} $end={10}>
          <Tool name="zoomSelected" />
          <Separator $before={2} />
          <StatField $width={149} aria-label="名称" />
          <Separator $before={4} $after={3} />
          <Tool name="editSet" />
          <SetSelect aria-label="轨迹集" />
          {filterTools.map((n) => (
            <Tool key={n} name={n} active={n === "filterSelected"} />
          ))}
        </ToolGroup>
        <ToolGroup $top={6} $end={19}>
          <Grip />
          <StatField $width={68} aria-label="帧" />
          <Separator />
          <StatField $width={68} aria-label="值" />
          <Separator $before={4} $after={4} />
          <Tool name="keyInfo" />
        </ToolGroup>
        <ToolGroup $top={6}>
          <Grip />
          {["outOfRange", "isolate", "relative", "bufferA", "bufferB"].map((n) => (
            <Tool key={n} name={n} />
          ))}
        </ToolGroup>
        <ToolGroup $top={6}>
          <Grip />
          <Tool name="pan"><FaHandPaper size={24} /></Tool>
          <Separator $before={4} $after={3} />
          <Tool name="frameHoriz" />
          <Tool name="frameValue" />
          <Tool name="frameBoth" />
          <Separator $before={4} $after={3} />
          <Tool name="zoom" />
          <Tool name="zoomRegion" />
          <Tool name="isolateCurve" />
        </ToolGroup>
      </ToolRow>
      <Scene $height={15}>
        <Dock $plain />
        <Explorer />
        <Viewport $dim>
          <svg>
            <FloorGrid ox={50} oy={15} color="#505050" />
            <g fill="none">
              <path d="M238 0Q240 10 246 15M310 2 300 15M318 0Q312 8 314 15M330 0 326 15M338 2 350 15M345 0 352 15M530 0 524 15M533 0 546 15M520 4 526 15M536 0V15M492 0 484 14M505 0 515 15M534 0 550 15M531 0 519 15" stroke="#787878" />
              <path d="M252 0 256 15M256 6 290 2M260 12 292 14M268 4 266 12 288 14 286 5ZM300 0 305 15" stroke="#108018" />
              <path d="M355 0H510L522 15H380Z" fill="#777" opacity=".55" />
              <path d="M343 0 360 11 382 15M406 0 413 15M460 0 464 15M508 0 522 15" stroke="#70f8f8" strokeWidth="3" />
              <path d="M378 2 388 8M432 0 441 7M468 2 480 12 504 1M474 15 488 2 494 15M462 8 506 13M498 0 486 15" stroke="#fff" />
              <path d="M376 3 388 11 400 9 430 14M382 0 384 9M470 0 478 8" stroke="#126b80" strokeWidth="2" strokeDasharray="4 2" />
              <path d="M425 0V15M386 12 397 3M484 3 498 10" stroke="#c9a63c" strokeDasharray="4 2" />
              <path d="M396 15 404 0M352 0 377 13" stroke="#168228" />
              <path d="M436 10 444 8 450 10M442 10 440 15" stroke="#ff1010" strokeWidth="2" />
            </g>
          </svg>
        </Viewport>
      </Scene>
    </Page>
  );
}
